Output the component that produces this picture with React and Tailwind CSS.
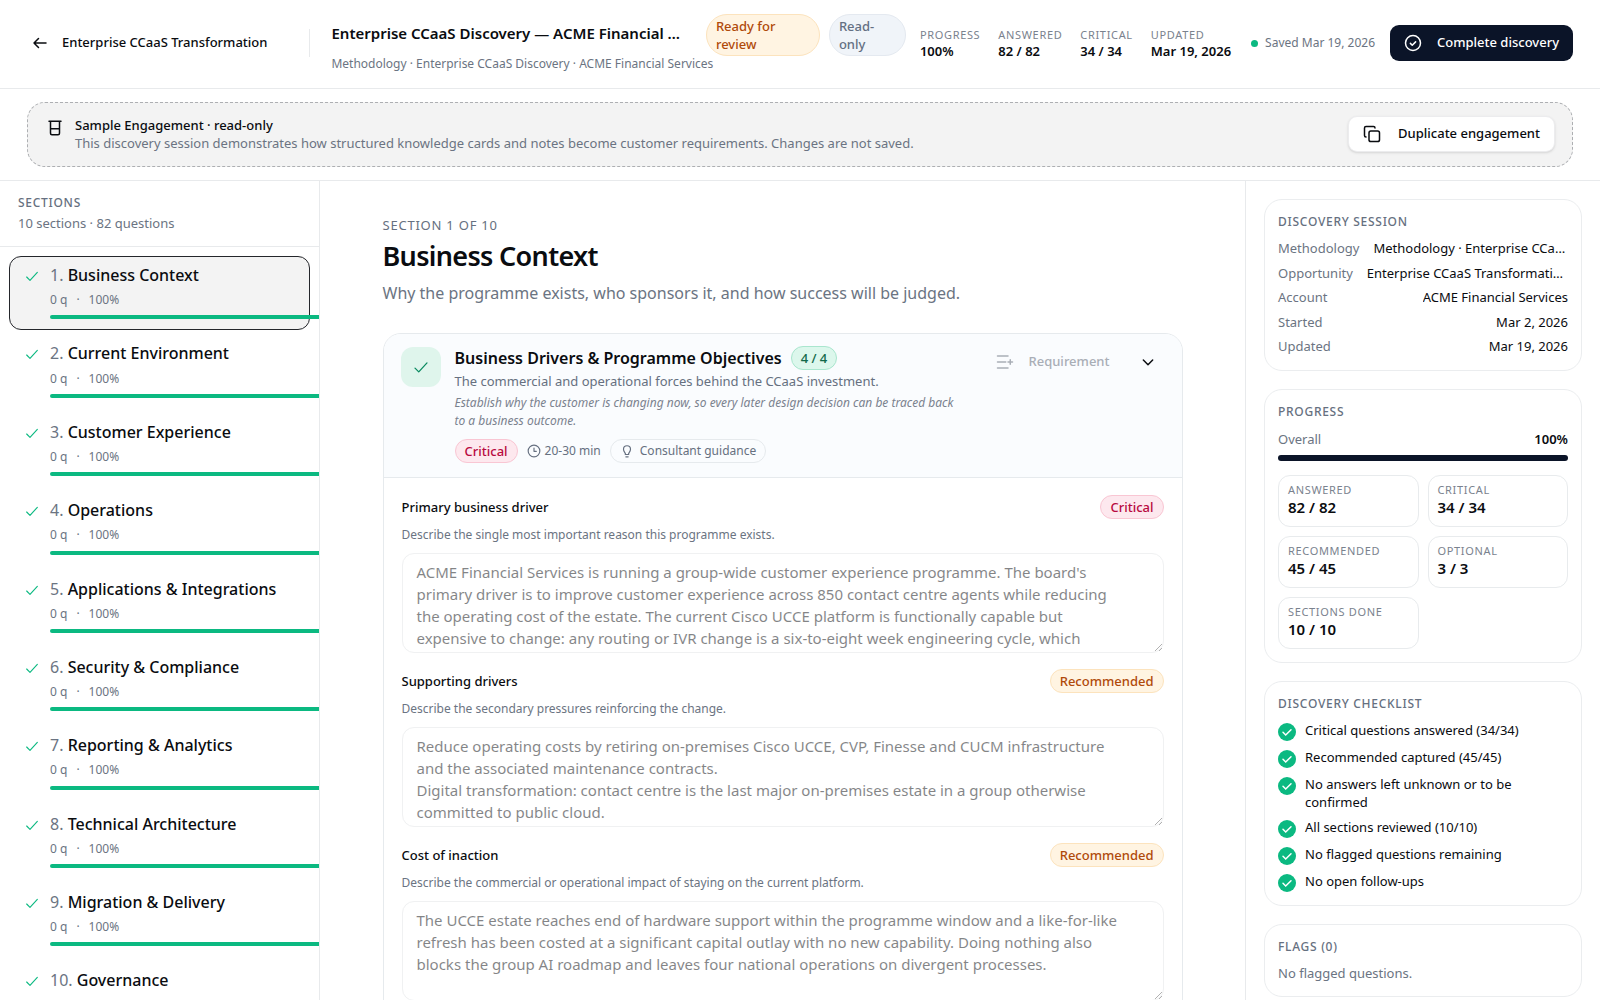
import { useState } from 'react';

const sections = [
  'Business Context',
  'Current Environment',
  'Customer Experience',
  'Operations',
  'Applications & Integrations',
  'Security & Compliance',
  'Reporting & Analytics',
  'Technical Architecture',
  'Migration & Delivery',
  'Governance',
];

const headerStats = [
  { label: 'Progress', value: '100%' },
  { label: 'Answered', value: '82 / 82' },
  { label: 'Critical', value: '34 / 34' },
  { label: 'Updated', value: 'Mar 19, 2026' },
];

const sessionRows = [
  { label: 'Methodology', value: 'Methodology · Enterprise CCaaS Discovery' },
  { label: 'Opportunity', value: 'Enterprise CCaaS Transformation' },
  { label: 'Account', value: 'ACME Financial Services' },
  { label: 'Started', value: 'Mar 2, 2026' },
  { label: 'Updated', value: 'Mar 19, 2026' },
];

const progressCards = [
  { label: 'Answered', value: '82 / 82' },
  { label: 'Critical', value: '34 / 34' },
  { label: 'Recommended', value: '45 / 45' },
  { label: 'Optional', value: '3 / 3' },
  { label: 'Sections done', value: '10 / 10' },
];

const checklist = [
  'Critical questions answered (34/34)',
  'Recommended captured (45/45)',
  'No answers left unknown or to be confirmed',
  'All sections reviewed (10/10)',
  'No flagged questions remaining',
  'No open follow-ups',
];

const questions = [
  {
    id: 'primary-driver',
    label: 'Primary business driver',
    hint: 'Describe the single most important reason this programme exists.',
    level: 'Critical',
    answer:
      "ACME Financial Services is running a group-wide customer experience programme. The board's primary driver is to improve customer experience across 850 contact centre agents while reducing the operating cost of the estate. The current Cisco UCCE platform is functionally capable but expensive to change: any routing or IVR change is a six-to-eight week engineering cycle, which",
  },
  {
    id: 'supporting-drivers',
    label: 'Supporting drivers',
    hint: 'Describe the secondary pressures reinforcing the change.',
    level: 'Recommended',
    answer:
      'Reduce operating costs by retiring on-premises Cisco UCCE, CVP, Finesse and CUCM infrastructure and the associated maintenance contracts.\nDigital transformation: contact centre is the last major on-premises estate in a group otherwise committed to public cloud.',
  },
  {
    id: 'cost-of-inaction',
    label: 'Cost of inaction',
    hint: 'Describe the commercial or operational impact of staying on the current platform.',
    level: 'Recommended',
    answer:
      'The UCCE estate reaches end of hardware support within the programme window and a like-for-like refresh has been costed at a significant capital outlay with no new capability. Doing nothing also blocks the group AI roadmap and leaves four national operations on divergent processes.',
  },
];

const levelStyles = {
  Critical: 'border-[#f9c6d3] bg-[#fde8ee] text-[#b8093f]',
  Recommended: 'border-[#fce3bd] bg-[#fff4e2] text-[#b04a0a]',
  Done: 'border-[#a9e6ce] bg-[#dcf7ec] text-[#10694a]',
};

// ── ICONS ──
const Icon = ({ children, className, width = 1.7 }) => (
  <svg
    viewBox="0 0 24 24"
    fill="none"
    stroke="currentColor"
    strokeWidth={width}
    strokeLinecap="round"
    strokeLinejoin="round"
    aria-hidden="true"
    className={`shrink-0 ${className}`}
  >
    {children}
  </svg>
);

const CheckIcon = ({ className }) => (
  <Icon className={className}>
    <path d="M4 13.5l5 5L20 6.5" />
  </Icon>
);

const Badge = ({ level, children }) => (
  <span className={`shrink-0 rounded-full border px-[9px] text-[13px] leading-[22px] font-medium ${levelStyles[level]}`}>
    {children}
  </span>
);

const SideCard = ({ title, children }) => (
  <section className="rounded-[18px] border border-[#ebedef] bg-white p-[13px]">
    <h2 className="text-xs leading-[17px] font-medium tracking-[0.06em] text-[#667080] uppercase">{title}</h2>
    {children}
  </section>
);

const Question = ({ question }) => (
  <div>
    <div className="flex items-center justify-between">
      <label htmlFor={question.id} className="text-[13px] leading-5 font-medium">
        {question.label}
      </label>
      <Badge level={question.level}>{question.level}</Badge>
    </div>
    <p className="mt-[7px] text-xs leading-[18px] text-[#6b7482]">{question.hint}</p>
    <textarea
      id={question.id}
      disabled
      defaultValue={question.answer}
      className="mt-[9px] block h-[100px] w-full resize-y overflow-hidden rounded-xl border border-[#e2e4e6] py-[7px] pr-10 pl-3.5 text-[15px] leading-[22px] opacity-50 outline-none"
    />
  </div>
);

const App = () => {
  const [active, setActive] = useState(0);

  return (
    <div className="flex h-screen flex-col overflow-hidden bg-white font-['Noto_Sans',sans-serif] text-[#0a0c10]">

      {/* ── HEADER ── */}
      <header className="flex h-[89px] shrink-0 items-center border-b border-[#e8eaec] px-[27px] pb-0.5">
        <a href="#transformation" className="flex shrink-0 items-center gap-[13px] pl-1 text-[13px] font-medium">
          <Icon className="size-[18px]" width={2}>
            <path d="M20 12H4m6-6l-6 6 6 6" />
          </Icon>
          Enterprise CCaaS Transformation
        </a>
        <div className="mr-[21px] ml-[42px] h-7 w-px shrink-0 bg-[#e8eaec]" />

        <div className="min-w-0 flex-1">
          <div className="flex items-center gap-[9px]">
            <h1 className="truncate pr-3 pb-1 text-[15px] leading-6 font-semibold">
              Enterprise CCaaS Discovery — ACME Financial Services
            </h1>
            <span className="w-[114px] shrink-0 rounded-[22px] border border-[#fce3bd] bg-[#fff4e2] px-[9px] py-[2px] text-[13px] leading-[18px] font-medium text-[#b04a0a]">
              Ready for review
            </span>
            <span className="w-[77px] shrink-0 rounded-[22px] border border-[#e4e9f0] bg-[#f0f4f9] px-[9px] py-[2px] text-[13px] leading-[18px] font-medium text-[#647083]">
              Read-only
            </span>
          </div>
          <p className="text-xs leading-4 text-[#6b7482]">
            Methodology · Enterprise CCaaS Discovery · ACME Financial Services
          </p>
        </div>

        <dl className="ml-3.5 flex shrink-0 gap-[18px]">
          {headerStats.map((stat) => (
            <div key={stat.label}>
              <dt className="text-[11px] leading-4 tracking-[0.06em] text-[#7a828e] uppercase">{stat.label}</dt>
              <dd className="text-[13px] leading-4 font-semibold">{stat.value}</dd>
            </div>
          ))}
        </dl>
        <div className="ml-5 flex shrink-0 items-center gap-[7px] pr-0.5 text-xs text-[#6b7482]">
          <span className="size-[7px] rounded-full bg-[#0bb981]" />
          Saved Mar 19, 2026
        </div>
        <button className="ml-[13px] flex h-9 shrink-0 items-center gap-[15px] rounded-[9px] bg-[#0b1428] px-3.5 text-[13px] font-medium text-white">
          <Icon className="size-[18px]" width={2}>
            <circle cx="12" cy="12" r="10" />
            <path d="M8.5 12.5l2.5 2.5 4.5-4.5" />
          </Icon>
          Complete discovery
        </button>
      </header>

      {/* ── SAMPLE BANNER ── */}
      <div className="shrink-0 border-b border-[#e8eaec] px-[27px] py-[13px]">
        <div className="flex items-center justify-between rounded-[18px] border border-dashed border-[#adafb2] bg-[#f3f3f3] pt-[13px] pr-[17px] pb-3.5 pl-[18px]">
          <div className="flex gap-[11px]">
            <Icon className="mt-[3px] size-[18px]" width={2}>
              <path d="M4 3h16M6 3v16a2 2 0 002 2h8a2 2 0 002-2V3M6 13h12" />
            </Icon>
            <div className="text-[13px] leading-[18px]">
              <p className="font-medium">Sample Engagement · read-only</p>
              <p className="text-[#6b7482]">
                This discovery session demonstrates how structured knowledge cards and notes become customer
                requirements. Changes are not saved.
              </p>
            </div>
          </div>
          <button className="flex h-9 items-center gap-[17px] rounded-[9px] border border-[#ececee] bg-white px-3.5 text-[13px] font-medium shadow-sm">
            <Icon className="size-[18px]" width={2}>
              <rect x="8" y="8" width="14" height="14" rx="2.5" />
              <path d="M4 16a2 2 0 01-2-2V4a2 2 0 012-2h10a2 2 0 012 2" />
            </Icon>
            Duplicate engagement
          </button>
        </div>
      </div>

      <div className="flex min-h-0 flex-1">

        {/* ── SECTIONS ── */}
        <nav className="w-80 shrink-0 overflow-hidden border-r border-[#e8eaec]">
          <div className="border-b border-[#e8eaec] px-[18px] pt-3 pb-[13px]">
            <h2 className="text-xs leading-5 font-medium tracking-[0.06em] text-[#667080] uppercase">Sections</h2>
            <p className="text-[13px] leading-5 text-[#6b7482]">10 sections · 82 questions</p>
          </div>
          <ul className="flex flex-col gap-1 p-[9px]">
            {sections.map((name, i) => (
              <li key={name}>
                <button
                  onClick={() => setActive(i)}
                  className={`flex w-[301px] gap-2.5 rounded-xl border px-3.5 pt-[7px] pb-2.5 text-left ${
                    i === active ? 'border-[#24262b] bg-[#f3f3f3]' : 'border-transparent'
                  }`}
                >
                  <CheckIcon className="mt-1 size-4 text-[#0bb981]" />
                  <span className="w-[280px] shrink-0">
                    <span className="block text-base leading-[1.45] font-medium">
                      <span className="font-normal text-[#6b7482]">{i + 1}.</span> {name}
                    </span>
                    <span className="mt-[3px] flex gap-[9px] text-xs leading-[1.6] text-[#6b7482]">
                      <span>0 q</span>
                      <span>·</span>
                      <span>100%</span>
                    </span>
                    <span className="mt-1.5 block h-1 rounded-full bg-[#0bb981]" />
                  </span>
                </button>
              </li>
            ))}
          </ul>
        </nav>

        {/* ── QUESTIONS ── */}
        <main className="min-w-0 flex-1 overflow-hidden px-[62px] pt-[34px]">
          <div className="mx-auto max-w-[800px]">
            <p className="text-[13px] leading-5 tracking-[0.06em] text-[#667080] uppercase">Section 1 of 10</p>
            <h2 className="mt-1 text-[27px] leading-[34px] font-semibold tracking-tight">Business Context</h2>
            <p className="mt-2 text-base leading-6 text-[#6b7482]">
              Why the programme exists, who sponsors it, and how success will be judged.
            </p>

            <section className="mt-7 rounded-[18px] border border-[#e6eaed] bg-white">
              <div className="flex items-start gap-3.5 rounded-t-[17px] border-b border-[#e6eaed] bg-[#fafcfe] px-[17px] pt-3 pb-3.5">
                <div className="mt-px flex size-10 shrink-0 items-center justify-center rounded-xl bg-[#dff5ec] text-[#0a8a60]">
                  <CheckIcon className="size-[18px]" />
                </div>
                <div className="max-w-[505px] flex-1">
                  <div className="flex items-center gap-[9px]">
                    <h3 className="text-base leading-[22px] font-semibold whitespace-nowrap">
                      Business Drivers & Programme Objectives
                    </h3>
                    <Badge level="Done">4 / 4</Badge>
                  </div>
                  <p className="text-[13px] leading-[22px] text-[#667080]">
                    The commercial and operational forces behind the CCaaS investment.
                  </p>
                  <p className="mt-0.5 text-xs leading-[18px] text-[#7a828e] italic">
                    Establish why the customer is changing now, so every later design decision can be traced back to a
                    business outcome.
                  </p>
                  <div className="mt-[9px] flex items-center gap-[9px] text-xs text-[#667080]">
                    <Badge level="Critical">Critical</Badge>
                    <span className="flex items-center gap-1">
                      <Icon className="size-3.5" width={2}>
                        <circle cx="12" cy="12" r="10" />
                        <path d="M12 7v5.5h4" />
                      </Icon>
                      20-30 min
                    </span>
                    <button className="flex h-6 items-center gap-1.5 rounded-full border border-[#e6eaed] px-[9px]">
                      <Icon className="size-3.5" width={2}>
                        <path d="M9 18h6M10 22h4M9.5 18c0-3-3.5-4.5-3.5-9a6 6 0 0112 0c0 4.5-3.5 6-3.5 9" />
                      </Icon>
                      Consultant guidance
                    </button>
                  </div>
                </div>
                <div className="ml-auto flex h-8 items-center gap-[30px] pr-[9px]">
                  <button disabled className="flex items-center gap-3.5 text-[13px] font-medium text-[#a9aeb6]">
                    <Icon className="size-[18px]" width={2}>
                      <path d="M2 4h14M2 12h11M2 20h14M19 9v6M16 12h6" />
                    </Icon>
                    Requirement
                  </button>
                  <button aria-label="Collapse card">
                    <Icon className="size-4" width={2.2}>
                      <path d="M5 9l7 7 7-7" />
                    </Icon>
                  </button>
                </div>
              </div>

              <div className="flex flex-col gap-4 px-[18px] py-[17px]">
                {questions.map((q) => (
                  <Question key={q.id} question={q} />
                ))}
              </div>
            </section>
          </div>
        </main>

        {/* ── SESSION SUMMARY ── */}
        <aside className="flex w-[355px] shrink-0 flex-col gap-[18px] overflow-hidden border-l border-[#e8eaec] p-[18px]">
          <SideCard title="Discovery session">
            <dl className="mt-[9px] flex flex-col gap-[5px] text-[13px] leading-normal">
              {sessionRows.map((row) => (
                <div key={row.label} className="flex justify-between gap-3.5">
                  <dt className="text-[#6b7482]">{row.label}</dt>
                  <dd className="truncate">{row.value}</dd>
                </div>
              ))}
            </dl>
          </SideCard>

          <SideCard title="Progress">
            <div className="mt-[9px] flex justify-between text-[13px] leading-5">
              <span className="text-[#6b7482]">Overall</span>
              <span className="font-semibold">100%</span>
            </div>
            <div className="mt-1.5 h-1.5 rounded-full bg-[#0b1428]" />
            <dl className="mt-3.5 grid grid-cols-2 gap-[9px]">
              {progressCards.map((card) => (
                <div key={card.label} className="rounded-xl border border-[#e8ebed] px-[9px] pt-1.5 pb-2.5">
                  <dt className="text-[11px] leading-4 tracking-[0.06em] text-[#7a828e] uppercase">{card.label}</dt>
                  <dd className="text-[15px] leading-[18px] font-semibold">{card.value}</dd>
                </div>
              ))}
            </dl>
          </SideCard>

          <SideCard title="Discovery checklist">
            <ul className="mt-[9px] flex flex-col gap-[7px] text-[13px] leading-[18px]">
              {checklist.map((item) => (
                <li key={item} className="flex gap-[9px]">
                  <svg viewBox="0 0 18 18" aria-hidden="true" className="mt-0.5 size-[18px] shrink-0">
                    <circle cx="9" cy="9" r="9" fill="#0bb981" />
                    <path d="M5 9.3l2.7 2.7L13 6.7" fill="none" stroke="#fff" strokeWidth="1.5" strokeLinecap="round" />
                  </svg>
                  {item}
                </li>
              ))}
            </ul>
          </SideCard>

          <SideCard title="Flags (0)">
            <p className="mt-2 text-[13px] leading-5 text-[#6b7482]">No flagged questions.</p>
          </SideCard>
        </aside>
      </div>
    </div>
  );
};

export default App;
